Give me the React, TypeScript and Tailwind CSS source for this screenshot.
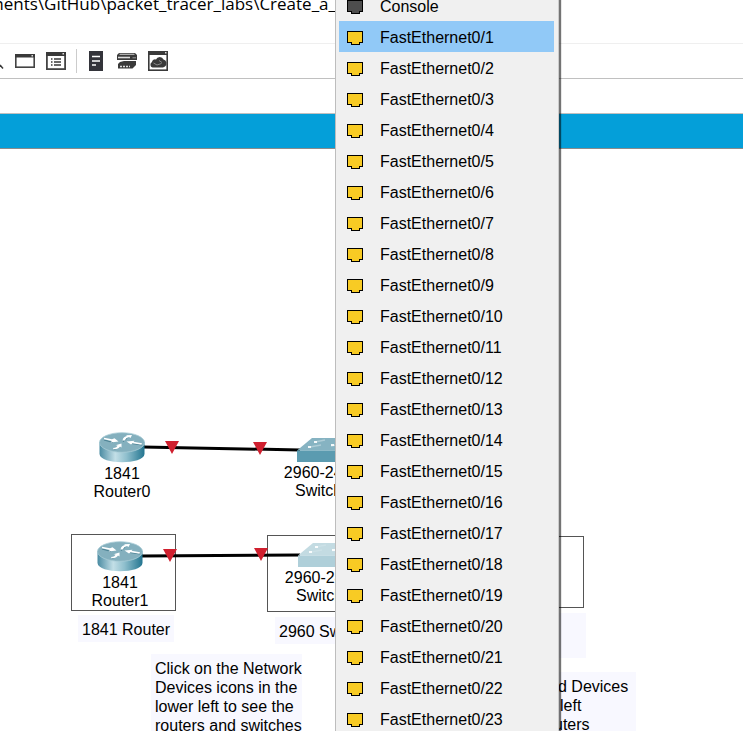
import type { ReactNode } from "react";

const ports = Array.from({ length: 23 }, (_, i) => `FastEthernet0/${i + 1}`);

function PortIcon({ fill }: { fill: string }) {
  return (
    <svg width="16" height="14" viewBox="0 0 16 14" aria-hidden="true" shapeRendering="crispEdges">
      <path d="M0.5 0.5H15.5V11.5H12.5V13.5H4.5V11.5H0.5Z" fill={fill} stroke="#000" />
    </svg>
  );
}

function MenuItem({ label, fill, active }: { label: string; fill: string; active?: boolean }) {
  return (
    <li>
      <button
        type="button"
        role="menuitem"
        className={`flex h-[31px] w-full items-center gap-[17px] pt-0.5 pl-2 text-left ${active ? "bg-[#91c9f7]" : ""}`}
      >
        <PortIcon fill={fill} />
        <span>{label}</span>
      </button>
    </li>
  );
}

function PortMenu() {
  return (
    <ul
      role="menu"
      className="absolute -top-2.5 left-[335px] w-[224px] border-x border-l-[#bdbdbd] border-r-[#cccccc] bg-[#f0f0f0] pr-1 pl-[3px] shadow-[2px_0_1px_0_rgba(0,0,0,0.55)]"
    >
      <MenuItem label="Console" fill="#4d4d4d" />
      {ports.map((p, i) => (
        <MenuItem key={p} label={p} fill="#f8cb24" active={i === 0} />
      ))}
    </ul>
  );
}

function ToolButton({ label, children }: { label: string; children: ReactNode }) {
  return (
    <button type="button" aria-label={label} className="flex h-6 w-5 items-center justify-center">
      {children}
    </button>
  );
}

function Toolbar() {
  return (
    <div role="toolbar" className="flex h-9 items-center border-y border-t-[#efefef] border-b-[#c0c0c0]">
      <svg width="4" height="20" viewBox="0 0 4 20" aria-hidden="true">
        <path d="M0 14L3 17.500" stroke="#3a3a3a" strokeWidth="1.500" />
      </svg>
      <div className="ml-[11px] flex gap-[11px]">
        <ToolButton label="Window">
          <svg width="20" height="14" viewBox="0 0 20 14">
            <rect x="0.800" y="0.800" width="18.400" height="12.400" fill="#fff" stroke="#444" strokeWidth="1.600" />
            <path d="M0 0H20V3.500H0Z" fill="#3a3a3a" />
            <path d="M16.500 1H18V2.500H16.500Z" fill="#ddd" />
          </svg>
        </ToolButton>
        <ToolButton label="List">
          <svg width="20" height="18" viewBox="0 0 20 18">
            <rect x="0.900" y="0.900" width="18.200" height="16.200" fill="#fff" stroke="#444" strokeWidth="1.800" />
            <path d="M0 0H20V4H0Z" fill="#3a3a3a" />
            <path d="M16.500 1H18V2.500H16.500Z" fill="#ddd" />
            <path d="M5 7H6.500M8 7H15M5 10H6.500M8 10H15M5 13H6.500M8 13H15" stroke="#3a3a3a" strokeWidth="1.500" />
          </svg>
        </ToolButton>
      </div>
      <div className="ml-[10px] h-6 w-px bg-[#cccccc]" />
      <div className="ml-[9px] flex gap-[11px]">
        <ToolButton label="Notes">
          <svg width="14" height="20" viewBox="0 0 14 20">
            <path d="M0 0H14V20H0Z" fill="#33343a" />
            <path d="M3 5.500H11M3 10H11M3 14H7" stroke="#fff" strokeWidth="1.500" />
          </svg>
        </ToolButton>
        <ToolButton label="Devices">
          <svg width="20" height="16" viewBox="0 0 20 16">
            <path d="M2 0H18L20 2V7H0V2Z" fill="#3a3a3a" />
            <path d="M2.500 1.300H17.500" stroke="#bbb" strokeWidth="1.200" />
            <path d="M1 4.500H13" stroke="#ddd" strokeWidth="1.600" />
            <path d="M15.500 4.800H19" stroke="#999" strokeWidth="1" />
            <path d="M0 7.300H14L12 9.500H2Z" fill="#fff" />
            <path d="M3 9L7 8H19V12L15.500 15.500H1V11Z" fill="#3a3a3a" />
            <path d="M3 13.500H13" stroke="#ddd" strokeWidth="1.600" strokeDasharray="2 1" />
          </svg>
        </ToolButton>
        <ToolButton label="Cloud">
          <svg width="20" height="20" viewBox="0 0 20 20">
            <rect x="0.800" y="0.800" width="18.400" height="18.400" fill="#fff" stroke="#3a3a3a" strokeWidth="1.600" />
            <path d="M0 0H20V4H0Z" fill="#3a3a3a" />
            <path d="M17 1H18.500V2.500H17Z" fill="#ddd" />
            <path d="M4.500 16.500A3 3 0 0 1 4 11A3 3 0 0 1 8 8.500A4 4 0 0 1 15.500 8.500A4 4 0 0 1 17 15.500L15 16.500Z" fill="#3a3a3a" />
            <path d="M5.500 12L9 14M11 9.500L14 11.500M9 14L13.500 12.500" stroke="#888" />
          </svg>
        </ToolButton>
      </div>
    </div>
  );
}

function Router() {
  return (
    <svg width="46" height="32" viewBox="0 0 46 32" aria-hidden="true">
      <defs>
        <linearGradient id="side" x1="0" x2="1">
          <stop offset="0" stopColor="#4a8ba2" />
          <stop offset="0.350" stopColor="#c3dfe7" />
          <stop offset="0.600" stopColor="#8fbfcd" />
          <stop offset="1" stopColor="#237590" />
        </linearGradient>
      </defs>
      <path d="M0.500 10V22C1 33 45 33 45.500 22V10Z" fill="url(#side)" />
      <ellipse cx="23" cy="10.500" rx="22.500" ry="9.800" fill="#84b0be" stroke="#a8cbd5" strokeWidth="0.800" />
      <g fill="none" stroke="#4d8294" strokeWidth="1.200">
        <path d="M5 8L14 10.500M24 9.500L28 6M15 17.500L19 15.500M43 13L33 11.500" />
      </g>
      <g fill="#fff">
        <path d="M5 5.800L13 7.300L15.500 6.300L19.500 9.500L11.500 10.500L13 9L5 7.300Z" />
        <path d="M23.500 8.500C24 5.500 26 4.500 28 4L27 3.200L33 3L31.500 6L30 5C28 5.500 26.500 6.500 26 8.500Z" />
        <path d="M14 16C17 16 18 15 18.500 13.500L16.500 13.200L22.500 11.500L22.500 15.500L21 14.500C20 16 18 17.500 14.500 17.200Z" />
        <path d="M43 11.200L34.500 9.700L35.500 8.800L27.500 9.500L32 12.500L33.500 11.200L42.500 12.800Z" />
      </g>
    </svg>
  );
}

function Switch({ top, front }: { top: string; front: string }) {
  return (
    <svg width="52" height="25" viewBox="0 0 52 25" aria-hidden="true">
      <path d="M0 12.500L15 0H52V12.500Z" fill={top} />
      <path d="M0 12.500H52V24H0Z" fill={front} />
      <path d="M18 4L28 2M13 9L24 7M34 8L44 6" stroke="#d6e7ec" strokeOpacity="0.500" strokeWidth="1.300" />
      <path d="M17 3H20V5H17ZM11 8H14V10H11ZM34 6H37V8H34Z" fill="#fff" fillOpacity="0.900" />
    </svg>
  );
}

function Node({ className, icon, lines }: { className: string; icon: ReactNode; lines: string[] }) {
  return (
    <div className={`absolute flex w-24 flex-col items-center leading-[18px] ${className}`}>
      <div className="pb-px">{icon}</div>
      {lines.map((l) => (
        <span key={l} className="whitespace-nowrap">{l}</span>
      ))}
    </div>
  );
}

function Workspace() {
  return (
    <main className="relative grow overflow-hidden bg-white">
      <div className="absolute top-[385px] left-[71px] h-[77px] w-[105px] border border-[#555]" />
      <div className="absolute top-[386px] left-[267px] h-[77px] w-[105px] border border-[#555]" />
      <div className="absolute top-[387px] left-[479px] h-[72px] w-[105px] border border-[#555]" />

      <svg className="absolute top-0 left-0 h-[480px] w-[400px]" viewBox="0 0 400 480" aria-hidden="true">
        <path d="M143 298L300 301M141 407L300 406" stroke="#000" strokeWidth="3" />
        <path d="M165 292H179L172 305ZM253 293H267L260 306ZM163 400H177L170 413ZM254 399H268L261 412Z" fill="#d0202f" />
      </svg>

      <Node className="top-[283px] left-[74px]" icon={<Router />} lines={["1841", "Router0"]} />
      <Node className="top-[392px] left-[72px]" icon={<Router />} lines={["1841", "Router1"]} />
      <Node
        className="top-[289px] left-[275px]"
        icon={<Switch top="#86b3c2" front="#5b9bb0" />}
        lines={["2960-24TT", "Switch0"]}
      />
      <Node
        className="top-[394px] left-[276px]"
        icon={<Switch top="#c3dbe2" front="#afcfd9" />}
        lines={["2960-24TT", "Switch1"]}
      />

      <p className="absolute top-[466px] left-[78px] bg-[#f8f8ff] px-1 pt-1.5 pb-[3px] leading-[18px]">1841 Router</p>
      <p className="absolute top-[468px] left-[275px] bg-[#f8f8ff] px-1 pt-1.5 pb-[3px] leading-[18px]">2960 Switch</p>
      <div className="absolute top-[464px] left-[479px] h-[45px] w-[107px] bg-[#f8f8ff]" />
      <p className="absolute top-[505px] left-[151px] w-[151px] bg-[#f8f8ff] pt-[5px] pl-1 leading-[19px]">
        Click on the Network Devices icons in the lower left to see the routers and switches
      </p>
      <div className="absolute top-[523px] left-[554px] w-[82px] bg-[#f8f8ff] pt-[5px] leading-[19px]">
        <div className="pl-1">d Devices</div>
        <div className="pl-1.5">left</div>
        <div>uters</div>
      </div>
    </main>
  );
}

export default function App() {
  return (
    <div className="relative flex h-screen flex-col overflow-hidden bg-white font-['Liberation_Sans',Arial,sans-serif] text-[16px] text-black">
      <header className="flex h-[43px] items-start overflow-hidden font-['Open_Sans','Noto_Sans',sans-serif]">
        <div className="-mt-2 -ml-3 text-[17px] leading-6 whitespace-nowrap">ments\GitHub\packet_tracer_labs\Create_a_l</div>
      </header>
      <Toolbar />
      <div className="h-[34px] shrink-0" />
      <div className="h-9 shrink-0 border-y border-t-[#c0c0c0] border-b-[#8b8b8b] bg-[#049fd9]" />
      <Workspace />
      <PortMenu />
    </div>
  );
}
